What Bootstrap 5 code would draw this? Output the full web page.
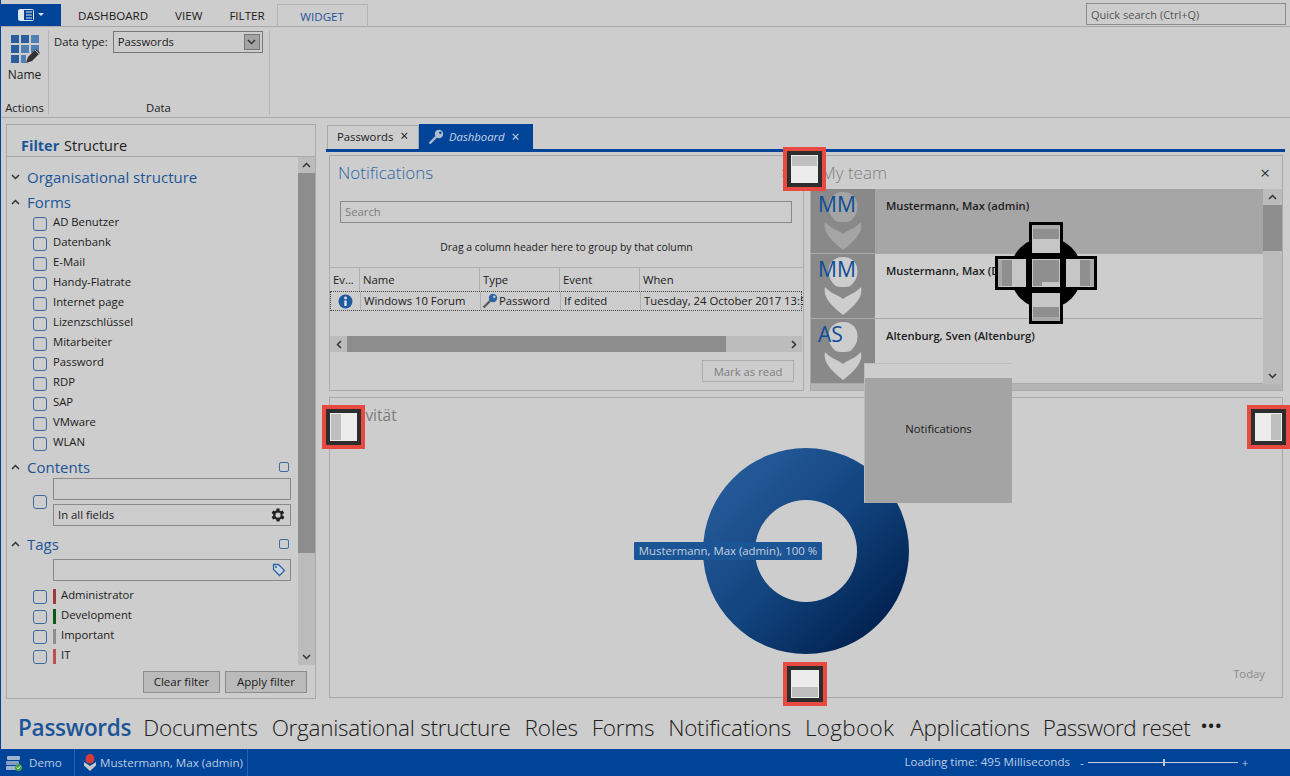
<!DOCTYPE html>
<html lang="en">
<head>
<meta charset="utf-8">
<title>Dashboard</title>
<link rel="stylesheet" href="https://cdn.jsdelivr.net/npm/bootstrap@5.3.0/dist/css/bootstrap.min.css">
<style>
:root{--blu:#00449a;--ttl:#1c5597;--bg:#cdcdcd;--ln:#a9a9a9;--ink:#202020}
html,body{margin:0;height:776px;overflow:hidden}
body{background:var(--bg);color:var(--ink);font-family:"Open Sans","Noto Sans",sans-serif;font-size:11.3px;line-height:16px}
.app-shell{width:1290px;height:776px;border-left:1px solid var(--blu);position:relative;overflow:hidden}
.top-strip{height:27px;border-bottom:1px solid var(--ln);padding-top:4px;flex:none}
.app-btn{width:60px;height:22px;background:var(--blu)}
.rtab{font-size:11.6px;line-height:24px}
.rt1{margin-left:17px}.rt2{margin-left:27px}.rt3{margin-left:27px}
.rtab-on{margin-left:12px;width:91px;height:23px;border:1px solid #b4b4b4;border-bottom:0;color:var(--ttl);text-align:center;line-height:23px}
.quick{width:200px;height:22px;margin:-1px 4px 0 auto;border:1px solid #8c8c8c;padding:3px 4px 0;color:#555;font-size:11px}
.ribbon{height:91px;border-bottom:1px solid var(--ln);flex:none;padding-top:4px}
.rg1{width:48px;border-right:1px solid #b4b4b4;height:84px}
.rg1>svg{margin-top:3px;flex:none}
.rg2{width:221px;border-right:1px solid #b4b4b4;height:84px;padding:0 6px 0 5px}
.rname{font-size:12px;line-height:14px;margin-top:4px}
.rcap{margin-top:auto;line-height:14px;height:14px;font-size:11.3px}
.dsel{width:150px;height:22px;border:1px solid #777;padding-left:4px;line-height:20px;margin-left:5px}
.dsel-btn{width:16px;height:16px;background:#a3a3a3;border:1px solid #777;margin:2px 2px 0 auto}
.work{height:582px;flex:none;padding:6px 4px 0 5px}
.filter-pane{width:310px;height:575px;border:1px solid var(--ln);flex:none}
.ftitle{height:32px;border-bottom:1px solid var(--ln);padding:12px 0 0 14px;font-size:14.5px;line-height:18px;flex:none}
.ftitle b{color:var(--ttl);font-weight:700;margin-right:1px}
.fbody{height:508px;flex:none}
.flist{width:292px;padding-top:10px;overflow:hidden}
.vbar{width:17px;flex:none;background:#bcbcbc}
.vbar-a{height:16px;flex:none}
.vthumb{background:#8d8d8d;flex:none}
.th-f{height:380px}.th-t{height:46px}
.sec{font-size:15px;line-height:20px;color:var(--ttl);height:20px}
.sec svg{margin:0 7px 0 4px;flex:none}
.s2{margin-top:5px;margin-bottom:4px}.s3{margin-top:1px}.s4{margin-top:8px}
.chk{width:14px;height:14px;border:1.5px solid #3e6b9e;border-radius:3px;flex:none;display:block}
.itm{height:20px;padding-left:26px}
.itm .chk{margin:1px 6px 0 0}
.itm span{margin-top:-2px}
.chk-s{width:10px;height:10px;border-radius:2px;margin:0 9px 0 auto;border-width:1.3px}
.cbox{height:22px;border:1px solid #8a8a8a;width:238px;line-height:20px;padding-left:4px}
.contents{padding-left:26px;margin-top:1px}
.cstack{margin-left:6px;gap:4px}
.tagbox{margin:5px 0 8px 46px}
.tbar{width:3px;height:15px;margin-right:5px;flex:none}
.t-r{background:#9e3a3a}.t-g{background:#0b5a1c}.t-x{background:#8e8e8e}.t-p{background:#bd4f52}
.factions{height:35px;gap:5px;padding:6px 8px 0 0;flex:none}
.gbtn{height:22px;background:#bababa;border:1px solid #8c8c8c;line-height:20px;text-align:center;font-size:11.5px;flex:none}
.g1{width:77px}.g2{width:82px}
.doc-col{width:958px;margin-left:11px;flex:none}
.dtabs{height:25px;flex:none}
.dt1{width:92px;height:24px;margin-top:1px;border:1px solid #a9a9a9;border-bottom:0;padding-left:9px;line-height:20px}
.dt2{width:114px;height:25px;background:var(--blu);color:#c9d6e6;font-style:italic;line-height:24px;padding-left:9px}
.dt2>svg{margin-right:5px;flex:none}
.dclose{font-style:normal;font-size:14px;margin-left:7px}
.dline{height:3px;background:var(--blu);flex:none;margin-left:-1px}
.dock{padding:3px 2px 0 2px;gap:6px}
.dpanel{border:1px solid var(--ln);position:relative}
.p-notif{width:475px;height:236px}
.p-team{width:473px;height:236px;margin-left:2px;background:#b5b5b5}
.p-act{height:301px;margin-top:0;position:relative}
.ptitle{height:33px;font-size:17px;line-height:33px;padding-left:8px;font-weight:300;color:#2c66a6;flex:none}
.team-h{background:var(--bg);color:#7f7f7f;padding-left:10px}
.act-h{color:#7c7c7c;padding-left:8px;font-size:15.5px;line-height:34px;height:34px}
.px{margin-left:auto;margin-right:12px;font-size:17px;color:#333;font-weight:400;line-height:33px}
.nsearch{width:452px;height:22px;border:1px solid #8a8a8a;margin:12px 0 0 10px;color:#7c7c7c;padding-left:4px;line-height:20px;flex:none}
.groupby{height:45px;border-bottom:1px solid #b0b0b0;text-align:center;font-size:10.4px;line-height:49px;flex:none}
.gridrow{display:grid;grid-template-columns:30px 120px 80px 80px 162px;width:472px}
.gh{height:23px;line-height:24px}
.gh>div,.gc>div{border-right:1px solid #b0b0b0;padding-left:3px;white-space:nowrap;overflow:hidden}
.gh>div:last-child,.gc>div:last-child{border-right:0}
.gc{height:20px;line-height:18px;border:1px dotted #444}
.gtype{padding-left:1px !important;gap:1px}
.hbar{height:16px;margin-top:25px;background:#bcbcbc;width:472px;flex:none}
.hb-a{width:17px;flex:none}
.hb-t{width:379px;background:#8d8d8d;flex:none}
.mread{width:92px;height:22px;border:1px solid #adadad;color:#7d7d7d;text-align:center;line-height:21px;margin:8px 0 0 372px;flex:none}
.tlist{height:195px;overflow:hidden;background:var(--bg)}
.tcol{width:452px}
.trow{height:65px;border-bottom:1px solid #aaa;font-weight:600;font-size:11.2px;flex:none}
.trow-on{background:#a6a6a6}
.tav{width:64px;height:64px;background:#898989;position:relative;flex:none;overflow:hidden}
.tav svg{position:absolute;left:10px;top:1px}
.tav span{position:absolute;left:7px;top:2px;font-size:21px;line-height:26px;font-weight:400;color:#0d4d97}
.tname{margin:9px 0 0 11px;white-space:nowrap}
.tbar2{width:19px;margin-left:auto}
.donut-wrap{left:373px;top:50px;position:absolute}
.dlabel{position:absolute;left:304px;top:144px;width:188px;height:18px;background:#1c5596;color:#c4d0df;font-size:11.4px;line-height:18px;text-align:center;border-radius:1px;white-space:nowrap}
.today{position:absolute;right:17px;top:268px;color:#8a8a8a}
.bnav{height:49px;font-size:22.5px;line-height:30px;gap:14px;padding:13px 0 0 17px;flex:none;font-weight:300;white-space:nowrap;letter-spacing:-.25px}
.bnav b{color:var(--ttl);font-weight:600;margin-right:-2px}
.nav-lg{letter-spacing:.3px}
.nav-ap{margin-left:2px}
.nav-pw{margin-left:-1px;letter-spacing:-.55px}
.bdots{font-weight:700;margin:-3px 0 0 -3px;font-size:15px;letter-spacing:1.500px}
.status{height:27px;background:var(--blu);color:#bccde3;flex:none;font-size:11.6px;line-height:26px;white-space:nowrap}
.sseg{height:27px;border-right:1px solid #2a62a9;gap:6px;padding:0 6px 0 4px}
.sdemo{width:74px}.suser{width:173px;padding-left:9px;gap:4px}
.sload{margin-left:auto;margin-right:10px}
.zoomer{width:172px;margin-right:38px;gap:4px}
.ztrack{height:1px;background:#bccde3;width:150px;position:relative}
.ztrack i{position:absolute;left:75px;top:-3px;width:2px;height:7px;background:#bccde3}
/* overlays */
.guide{position:absolute;background:#e84a42;padding:4px;z-index:5}
.guide-in{width:100%;height:100%;border:4px solid #2d2d2d;background:#ececec;display:flex;padding:1px;flex-direction:column}
.g-t{left:782px;top:147px;width:43px;height:44px}
.g-b{left:782px;top:662px;width:44px;height:44px}
.g-l{left:321px;top:405px;width:43px;height:44px}
.g-r{left:1246px;top:405px;width:43px;height:44px}
.gshade{background:#bfbfbf;flex:none}
.gs-h{height:10px}.gs-w{width:10px;height:100%}
.gr{flex-direction:row}
.drag{position:absolute;left:863px;top:363px;width:148px;height:140px;z-index:4;background:#a4a4a4;border:1px solid #bcbcbc;border-bottom:0;border-right:0}
.drag-h{height:14px;background:var(--bg)}
.drag-b{height:125px;padding-bottom:24px}
.cross{position:absolute;left:994px;top:222px;width:102px;height:102px;display:grid;grid-template-columns:repeat(3,34px);grid-template-rows:repeat(3,34px);z-index:6}
.cross-bg{position:absolute;left:1009px;top:237px;width:72px;height:72px;border-radius:50%;background:#000;z-index:5}
.cc{border:3px solid #000;background:#c6c6c6;display:flex;padding:0;position:relative}
.cc i{background:#8f8f8f;display:block;border:1px solid #c6c6c6;flex:none}
.c-t{grid-area:1/2}.c-l{grid-area:2/1}.c-m{grid-area:2/2}.c-r{grid-area:2/3}.c-b{grid-area:3/2}
.c-t i,.c-b i{width:100%;height:15px}
.c-l i,.c-r i{width:15px;height:100%}
.c-t i{border-top:4px solid #a8a8a8}
.c-b i{border-bottom:4px solid #a8a8a8}
.c-l i{border-left:4px solid #a8a8a8}
.c-r i{border-right:4px solid #a8a8a8}
.c-m i{width:100%;height:100%}
.c-r{justify-content:flex-end}.c-b{align-items:flex-end}
.c-m b{position:absolute;right:1px;bottom:1px;width:17px;height:4px;background:#c6c6c6}
</style>
</head>
<body>
<div class="app-shell d-flex flex-column">

  <div class="top-strip d-flex">
    <div class="app-btn d-flex align-items-center justify-content-center gap-1">
      <svg width="16" height="12" viewBox="0 0 16 12"><rect x="0.5" y="0.5" width="15" height="11" rx="1" fill="none" stroke="#dfe7f1"/><rect x="1" y="1" width="5" height="10" fill="#dfe7f1"/><path d="M8 3h6M8 6h6M8 9h6" stroke="#dfe7f1"/></svg>
      <svg width="6" height="4" viewBox="0 0 6 4"><path d="M0 0h6L3 3z" fill="#dfe7f1"/></svg>
    </div>
    <div class="rtab rt1">DASHBOARD</div>
    <div class="rtab rt2">VIEW</div>
    <div class="rtab rt3">FILTER</div>
    <div class="rtab rtab-on">WIDGET</div>
    <div class="quick">Quick search (Ctrl+Q)</div>
  </div>

  <div class="ribbon d-flex">
    <div class="rg1 d-flex flex-column align-items-center">
      <svg width="30" height="30" viewBox="0 0 30 30"><g fill="#2a5d9c"><rect x="1" y="1" width="8" height="8"/><rect x="11" y="1" width="8" height="8"/><rect x="21" y="1" width="8" height="8" fill="#4f7fb4"/><rect x="1" y="11" width="8" height="8"/><rect x="11" y="11" width="8" height="8" fill="#4f7fb4"/><rect x="21" y="11" width="8" height="8" fill="#4f7fb4"/><rect x="1" y="21" width="8" height="8"/><rect x="11" y="21" width="5" height="8" fill="#4f7fb4"/></g><path d="M16 29l2-6 8-8 4 4-8 8z" fill="#333"/><path d="M25 16l4 4" stroke="#cdcdcd"/></svg>
      <div class="rname">Name</div>
      <div class="rcap">Actions</div>
    </div>
    <div class="rg2 d-flex flex-column">
      <div class="d-flex align-items-center">
        <span>Data type:</span>
        <div class="dsel d-flex"><span>Passwords</span>
          <div class="dsel-btn d-flex align-items-center justify-content-center"><svg width="9" height="6" viewBox="0 0 9 6"><path d="M1 1l3.500 3.500L8 1" fill="none" stroke="#333" stroke-width="1.500"/></svg></div>
        </div>
      </div>
      <div class="rcap text-center">Data</div>
    </div>
  </div>

  <div class="work d-flex">
    <div class="filter-pane d-flex flex-column">
      <div class="ftitle"><b>Filter</b> Structure</div>
      <div class="fbody d-flex">
        <div class="flist">
          <div class="sec d-flex align-items-center"><svg width="9" height="6" viewBox="0 0 9 6"><path d="M1 1l3.500 3.500L8 1" fill="none" stroke="#333" stroke-width="1.500"/></svg>Organisational structure</div>
          <div class="sec s2 d-flex align-items-center"><svg width="9" height="6" viewBox="0 0 9 6"><path d="M1 5l3.500-3.500L8 5" fill="none" stroke="#333" stroke-width="1.500"/></svg>Forms</div>
          <div class="itm d-flex"><i class="chk"></i><span>AD Benutzer</span></div>
          <div class="itm d-flex"><i class="chk"></i><span>Datenbank</span></div>
          <div class="itm d-flex"><i class="chk"></i><span>E-Mail</span></div>
          <div class="itm d-flex"><i class="chk"></i><span>Handy-Flatrate</span></div>
          <div class="itm d-flex"><i class="chk"></i><span>Internet page</span></div>
          <div class="itm d-flex"><i class="chk"></i><span>Lizenzschlüssel</span></div>
          <div class="itm d-flex"><i class="chk"></i><span>Mitarbeiter</span></div>
          <div class="itm d-flex"><i class="chk"></i><span>Password</span></div>
          <div class="itm d-flex"><i class="chk"></i><span>RDP</span></div>
          <div class="itm d-flex"><i class="chk"></i><span>SAP</span></div>
          <div class="itm d-flex"><i class="chk"></i><span>VMware</span></div>
          <div class="itm d-flex"><i class="chk"></i><span>WLAN</span></div>
          <div class="sec s3 d-flex align-items-center"><svg width="9" height="6" viewBox="0 0 9 6"><path d="M1 5l3.500-3.500L8 5" fill="none" stroke="#333" stroke-width="1.500"/></svg>Contents<i class="chk chk-s"></i></div>
          <div class="contents d-flex align-items-center">
            <i class="chk"></i>
            <div class="cstack d-flex flex-column">
              <div class="cbox"></div>
              <div class="cbox d-flex align-items-center justify-content-between"><span>In all fields</span>
                <svg class="me-1" width="18" height="18" viewBox="0 0 24 24"><path fill="#222" d="M19.400 13a7.500 7.500 0 0 0 0-2l2.100-1.600-2-3.500-2.500 1a7.500 7.500 0 0 0-1.700-1L15.400 3.200h-4l-.4 2.700a7.500 7.500 0 0 0-1.700 1l-2.500-1-2 3.500L6.900 11a7.500 7.500 0 0 0 0 2l-2.100 1.600 2 3.500 2.500-1a7.500 7.500 0 0 0 1.700 1l.4 2.700h4l.4-2.700a7.500 7.500 0 0 0 1.700-1l2.500 1 2-3.500zM13.400 15.500a3.500 3.500 0 1 1 0-7 3.500 3.500 0 0 1 0 7z"/></svg>
              </div>
            </div>
          </div>
          <div class="sec s4 d-flex align-items-center"><svg width="9" height="6" viewBox="0 0 9 6"><path d="M1 5l3.500-3.500L8 5" fill="none" stroke="#333" stroke-width="1.500"/></svg>Tags<i class="chk chk-s"></i></div>
          <div class="cbox tagbox d-flex align-items-center justify-content-end">
            <svg class="me-1" width="14" height="14" viewBox="0 0 14 14"><path d="M1.500 1.500h5l6 6-5 5-6-6z" fill="#c8d6e6" stroke="#2f659f" stroke-width="1.300"/><circle cx="4" cy="4" r="1" fill="#2f659f"/></svg>
          </div>
          <div class="itm d-flex"><i class="chk"></i><i class="tbar t-r"></i><span>Administrator</span></div>
          <div class="itm d-flex"><i class="chk"></i><i class="tbar t-g"></i><span>Development</span></div>
          <div class="itm d-flex"><i class="chk"></i><i class="tbar t-x"></i><span>Important</span></div>
          <div class="itm d-flex"><i class="chk"></i><i class="tbar t-p"></i><span>IT</span></div>
        </div>
        <div class="vbar d-flex flex-column">
          <div class="vbar-a d-flex align-items-center justify-content-center"><svg width="9" height="6" viewBox="0 0 9 6"><path d="M1 5l3.500-3.500L8 5" fill="none" stroke="#333" stroke-width="1.500"/></svg></div>
          <div class="vthumb th-f"></div>
          <div class="vbar-a d-flex align-items-center justify-content-center mt-auto"><svg width="9" height="6" viewBox="0 0 9 6"><path d="M1 1l3.500 3.500L8 1" fill="none" stroke="#333" stroke-width="1.500"/></svg></div>
        </div>
      </div>
      <div class="factions d-flex justify-content-end">
        <div class="gbtn g1">Clear filter</div>
        <div class="gbtn g2">Apply filter</div>
      </div>
    </div>

    <div class="doc-col d-flex flex-column">
      <div class="dtabs d-flex">
        <div class="dt1">Passwords<span class="dclose">×</span></div>
        <div class="dt2 d-flex align-items-center">
          <svg width="16" height="16" viewBox="0 0 16 16"><path d="M9 7L1.500 14.500" stroke="#aebdd0" stroke-width="2.400"/><circle cx="11" cy="5" r="4.200" fill="#aebdd0"/><circle cx="12.300" cy="3.700" r="1.200" fill="#00449a"/></svg>
          <span>Dashboard</span><span class="dclose">×</span>
        </div>
      </div>
      <div class="dline"></div>
      <div class="dock d-flex flex-column">
        <div class="d-flex gap-1">
          <div class="dpanel p-notif d-flex flex-column">
            <div class="ptitle d-flex">Notifications<span class="px">×</span></div>
            <div class="nsearch">Search</div>
            <div class="groupby">Drag a column header here to group by that column</div>
            <div class="gridrow gh"><div>Ev...</div><div>Name</div><div>Type</div><div>Event</div><div>When</div></div>
            <div class="gridrow gc">
              <div class="d-flex align-items-center"><svg class="ms-1" width="15" height="15" viewBox="0 0 15 15"><circle cx="7.500" cy="7.500" r="7" fill="#1e5a9f"/><rect x="6.300" y="6.500" width="2.400" height="5.500" fill="#dde6f0"/><circle cx="7.500" cy="4" r="1.400" fill="#dde6f0"/></svg></div>
              <div>Windows 10 Forum</div>
              <div class="gtype d-flex align-items-center"><svg width="16" height="16" viewBox="0 0 16 16" class="flex-shrink-0"><path d="M9 7L1.500 14.500" stroke="#5c5c5c" stroke-width="2.400"/><circle cx="11" cy="5" r="4.200" fill="#2a64a6"/><circle cx="12.300" cy="3.700" r="1.200" fill="#cdcdcd"/></svg><span>Password</span></div>
              <div>If edited</div>
              <div>Tuesday, 24 October 2017 13:56</div>
            </div>
            <div class="hbar d-flex">
              <div class="hb-a d-flex align-items-center justify-content-center"><svg width="6" height="9" viewBox="0 0 6 9"><path d="M5 1L1.500 4.500 5 8" fill="none" stroke="#333" stroke-width="1.500"/></svg></div>
              <div class="hb-t"></div>
              <div class="hb-a d-flex align-items-center justify-content-center ms-auto"><svg width="6" height="9" viewBox="0 0 6 9"><path d="M1 1l3.500 3.500L1 8" fill="none" stroke="#333" stroke-width="1.500"/></svg></div>
            </div>
            <div class="mread">Mark as read</div>
          </div>

          <div class="dpanel p-team d-flex flex-column">
            <div class="ptitle team-h d-flex">My team<span class="px">×</span></div>
            <div class="d-flex tlist">
              <div class="tcol d-flex flex-column">
                <div class="trow trow-on d-flex">
                  <div class="tav"><svg width="44" height="62" viewBox="0 0 44 62"><path d="M22 2c9 0 15 6 14.500 16-.3 5-3 9-6.500 12.500-3 2-13 2-16 0C10.500 27 7.800 23 7.500 18 7 8 13 2 22 2z" fill="#a5a5a5"/><path d="M4 32C9 38 17 40 22 44 27 40 35 38 40 32 42 41 36 49 22 60 8 49 2 41 4 32z" fill="#a5a5a5"/></svg><span>MM</span></div>
                  <div class="tname">Mustermann, Max (admin)</div>
                </div>
                <div class="trow d-flex">
                  <div class="tav"><svg width="44" height="62" viewBox="0 0 44 62"><path d="M22 2c9 0 15 6 14.500 16-.3 5-3 9-6.500 12.500-3 2-13 2-16 0C10.500 27 7.800 23 7.500 18 7 8 13 2 22 2z" fill="#cdcdcd"/><path d="M4 32C9 38 17 40 22 44 27 40 35 38 40 32 42 41 36 49 22 60 8 49 2 41 4 32z" fill="#cdcdcd"/></svg><span>MM</span></div>
                  <div class="tname">Mustermann, Max (Demo)</div>
                </div>
                <div class="trow d-flex">
                  <div class="tav"><svg width="44" height="62" viewBox="0 0 44 62"><path d="M22 2c9 0 15 6 14.500 16-.3 5-3 9-6.500 12.500-3 2-13 2-16 0C10.500 27 7.800 23 7.500 18 7 8 13 2 22 2z" fill="#cdcdcd"/><path d="M4 32C9 38 17 40 22 44 27 40 35 38 40 32 42 41 36 49 22 60 8 49 2 41 4 32z" fill="#cdcdcd"/></svg><span>AS</span></div>
                  <div class="tname">Altenburg, Sven (Altenburg)</div>
                </div>
              </div>
              <div class="vbar tbar2 d-flex flex-column">
                <div class="vbar-a d-flex align-items-center justify-content-center"><svg width="9" height="6" viewBox="0 0 9 6"><path d="M1 5l3.500-3.500L8 5" fill="none" stroke="#333" stroke-width="1.500"/></svg></div>
                <div class="vthumb th-t"></div>
                <div class="vbar-a d-flex align-items-center justify-content-center mt-auto"><svg width="9" height="6" viewBox="0 0 9 6"><path d="M1 1l3.500 3.500L8 1" fill="none" stroke="#333" stroke-width="1.500"/></svg></div>
              </div>
            </div>
          </div>
        </div>

        <div class="dpanel p-act">
          <div class="act-h">Aktivität</div>
          <div class="donut-wrap">
            <svg width="206" height="206" viewBox="0 0 206 206">
              <defs><linearGradient id="dg" x1="0.100" y1="0.100" x2="0.900" y2="0.900"><stop offset="0" stop-color="#275c9b"/><stop offset=".5" stop-color="#12447f"/><stop offset="1" stop-color="#001f4c"/></linearGradient></defs>
              <path fill="url(#dg)" fill-rule="evenodd" d="M103 0a103 103 0 1 1 0 206a103 103 0 1 1 0-206zM103 52a51 51 0 1 0 0 102a51 51 0 1 0 0-102z"/>
            </svg>
          </div>
          <div class="dlabel">Mustermann, Max (admin), 100 %</div>
          <div class="today">Today</div>
        </div>
      </div>
    </div>
  </div>

  <div class="bnav d-flex">
    <b>Passwords</b><span>Documents</span><span>Organisational structure</span><span>Roles</span><span>Forms</span><span>Notifications</span><span class="nav-lg">Logbook</span><span class="nav-ap">Applications</span><span class="nav-pw">Password reset</span><span class="bdots">•••</span>
  </div>

  <div class="status d-flex">
    <div class="sseg sdemo d-flex align-items-center">
      <svg width="18" height="18" viewBox="0 0 18 18"><rect x="2" y="2" width="13" height="4" rx="1" fill="#9cb4d0"/><rect x="1" y="7" width="13" height="4" rx="1" fill="#86a0c0"/><rect x="1" y="12" width="13" height="4" rx="1" fill="#9cb4d0"/><circle cx="13.500" cy="13.500" r="3.500" fill="#43a047"/><path d="M11.800 13.500l1.300 1.300 2.200-2.400" fill="none" stroke="#fff"/></svg>
      <span>Demo</span>
    </div>
    <div class="sseg suser d-flex align-items-center">
      <svg class="flex-shrink-0" width="12" height="17" viewBox="0 0 12 17"><path d="M6 0c3 0 4.500 2 4.300 5-.2 2-1.300 3.500-2.500 4.300H3.800C2.600 8.500 1.500 7 1.700 5 1.500 2 3 0 6 0z" fill="#d63a3a"/><path d="M0 8l6 4 6-4v3.500L6 17 0 11.500z" fill="#c8c8c8"/></svg>
      <span>Mustermann, Max (admin)</span>
    </div>
    <div class="sload">Loading time: 495 Milliseconds</div>
    <div class="zoomer d-flex align-items-center"><span>-</span><div class="ztrack"><i></i></div><span>+</span></div>
  </div>

  <!-- drag overlay -->
  <div class="drag">
    <div class="drag-h"></div>
    <div class="drag-b d-flex align-items-center justify-content-center">Notifications</div>
  </div>
  <div class="guide g-t"><div class="guide-in"><div class="gshade gs-h"></div></div></div>
  <div class="guide g-b"><div class="guide-in justify-content-end"><div class="gshade gs-h"></div></div></div>
  <div class="guide g-l"><div class="guide-in gr"><div class="gshade gs-w"></div></div></div>
  <div class="guide g-r"><div class="guide-in gr justify-content-end"><div class="gshade gs-w"></div></div></div>
  <div class="cross-bg"></div>
  <div class="cross">
    <div class="cc c-t"><i></i></div>
    <div class="cc c-l"><i></i></div>
    <div class="cc c-m"><i></i><b></b></div>
    <div class="cc c-r"><i></i></div>
    <div class="cc c-b"><i></i></div>
  </div>
</div>
<script src="https://cdn.jsdelivr.net/npm/bootstrap@5.3.0/dist/js/bootstrap.bundle.min.js"></script>
</body>
</html>
